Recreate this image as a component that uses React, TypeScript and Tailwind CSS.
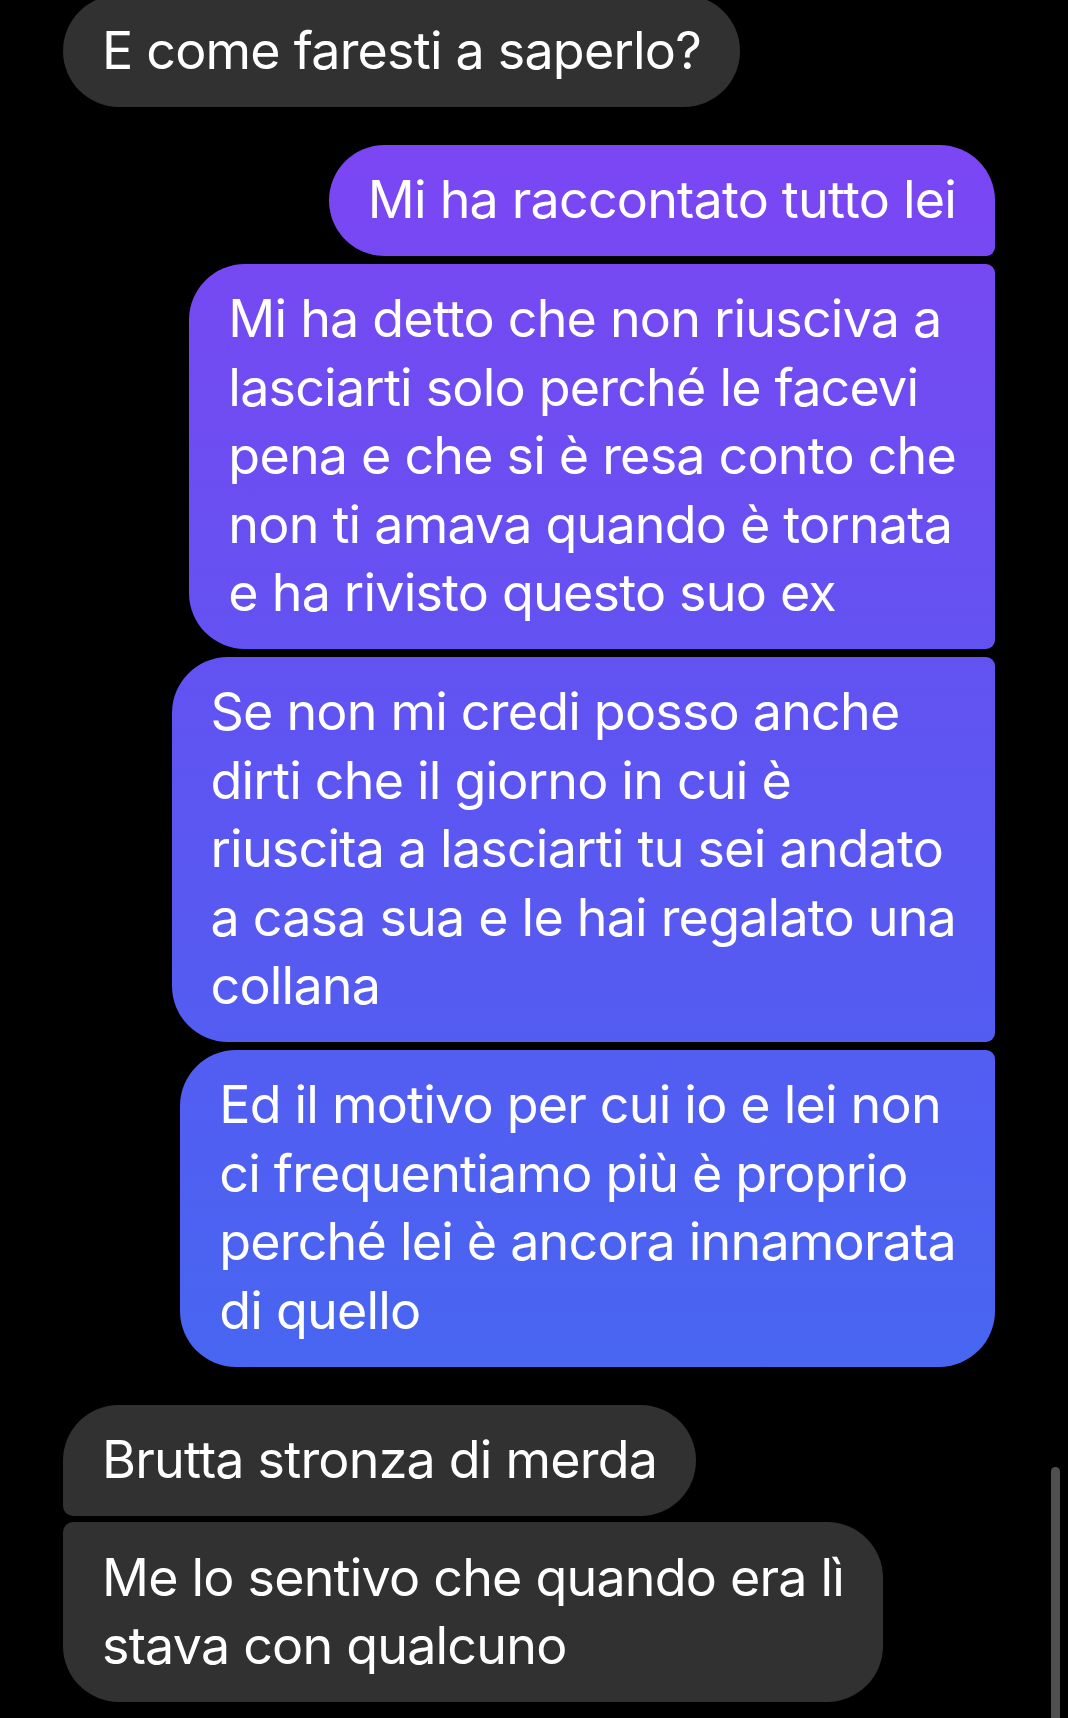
const FONT = "font-['Inter','Liberation_Sans',sans-serif]"

const PURPLE =
  'bg-[linear-gradient(180deg,#8044f3_0%,#7b46f3_9%,#5d55f2_45%,#4766f1_80%,#4269f1_100%)] bg-fixed'

function Bubble({
  lines,
  className,
}: {
  lines: string[]
  className: string
}) {
  return (
    <div
      className={`whitespace-nowrap px-[39px] py-[21.5px] text-[52px] leading-[68.5px] tracking-[-0.8px] text-white ${className}`}
    >
      {lines.map((line, i) => (
        <div key={i}>{line}</div>
      ))}
    </div>
  )
}

export default function App() {
  return (
    <div className={`relative min-h-[1718px] overflow-hidden bg-black ${FONT}`}>
      <div className="flex flex-col pl-[63px] pr-[73px]">
        <Bubble
          lines={['E come faresti a saperlo?']}
          className="-mt-[5px] self-start rounded-[56px] bg-[#313131]"
        />

        <div className="mt-[38px] flex flex-col items-end gap-[7.5px]">
          <Bubble
            lines={['Mi ha raccontato tutto lei']}
            className={`rounded-[56px] rounded-br-[9px] ${PURPLE}`}
          />
          <Bubble
            lines={[
              'Mi ha detto che non riusciva a',
              'lasciarti solo perché le facevi',
              'pena e che si è resa conto che',
              'non ti amava quando è tornata',
              'e ha rivisto questo suo ex',
            ]}
            className={`rounded-l-[56px] rounded-r-[9px] ${PURPLE}`}
          />
          <Bubble
            lines={[
              'Se non mi credi posso anche',
              'dirti che il giorno in cui è',
              'riuscita a lasciarti tu sei andato',
              'a casa sua e le hai regalato una',
              'collana',
            ]}
            className={`rounded-l-[56px] rounded-r-[9px] ${PURPLE}`}
          />
          <Bubble
            lines={[
              'Ed il motivo per cui io e lei non',
              'ci frequentiamo più è proprio',
              'perché lei è ancora innamorata',
              'di quello',
            ]}
            className={`rounded-[56px] rounded-tr-[9px] ${PURPLE}`}
          />
        </div>

        <div className="mt-[38px] flex flex-col items-start gap-[6px]">
          <Bubble
            lines={['Brutta stronza di merda']}
            className="rounded-[56px] rounded-bl-[10px] bg-[#313131]"
          />
          <Bubble
            lines={['Me lo sentivo che quando era lì', 'stava con qualcuno']}
            className="rounded-[56px] rounded-tl-[10px] bg-[#313131]"
          />
        </div>
      </div>

      {/* scroll indicator */}
      <div className="absolute left-[1051px] top-[1467px] h-[280px] w-[9px] rounded-full bg-[#4f4f4f]" />
    </div>
  )
}
